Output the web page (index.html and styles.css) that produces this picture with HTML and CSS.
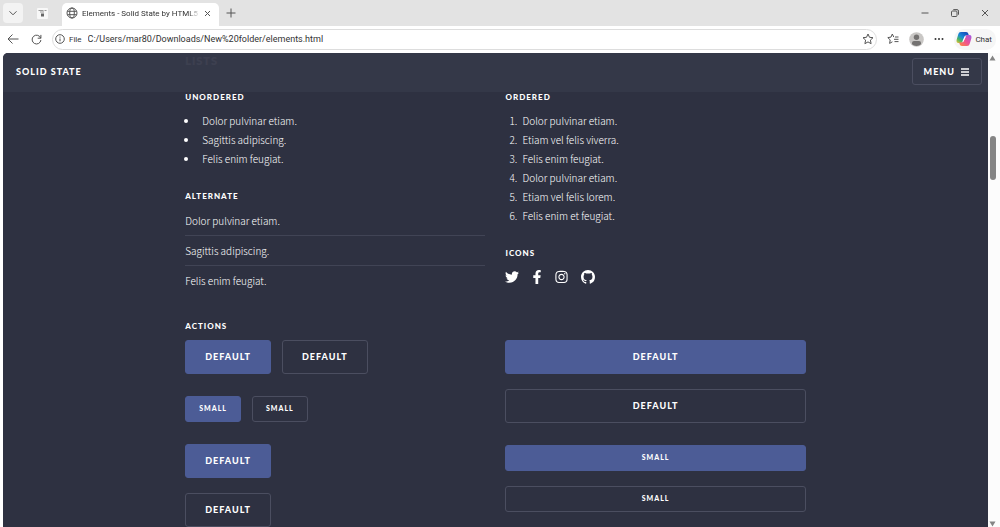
FILE: index.html
```html
<!DOCTYPE html>
<html lang="en">
<head>
    <meta charset="UTF-8">
    <meta name="viewport" content="width=device-width, initial-scale=1.0">
    <title>Elements - Solid State by HTML5 UP</title>
    <link rel="stylesheet" href="styles.css">
</head>
<body>
    <div class="tabbar">
        <button class="tab-search" aria-label="Search tabs">
            <svg width="10" height="10" viewBox="0 0 10 10"><path d="M1.500 3.300 5 6.800 8.500 3.300" class="line"/></svg>
        </button>
        <button class="pinned-tab" aria-label="Pinned tab">
            <svg width="11" height="11" viewBox="0 0 11 11"><rect width="11" height="11" rx="1" fill="#f8f8f8"/><path d="M1.500 2.500h5M7.500 2.500h2M3 4h4" stroke="#999" stroke-width="1"/><rect x="4" y="5.500" width="3" height="3" fill="#666"/></svg>
        </button>
        <div class="tab">
            <svg width="12" height="12" viewBox="0 0 12 12"><circle cx="6" cy="6" r="5" class="line"/><ellipse cx="6" cy="6" rx="2.300" ry="5" class="line"/><path d="M1.400 4.300h9.200M1.400 7.700h9.200" class="line"/></svg>
            <span class="tab-title">Elements - Solid State by HTML5 U</span>
            <button aria-label="Close tab">
                <svg width="7" height="7" viewBox="0 0 7 7"><path d="M1 1l5 5M6 1 1 6" class="line"/></svg>
            </button>
        </div>
        <button class="new-tab" aria-label="New tab">
            <svg width="10" height="10" viewBox="0 0 10 10"><path d="M5 .5v9M.5 5h9" class="line"/></svg>
        </button>
        <div class="window-buttons">
            <button aria-label="Minimize"><svg width="8" height="8" viewBox="0 0 8 8"><path d="M.5 4h7" class="line"/></svg></button>
            <button aria-label="Restore"><svg width="8" height="8" viewBox="0 0 8 8"><rect x=".5" y="2" width="5.500" height="5.500" rx="1" class="line"/><path d="M2.300.6h3.700a1.500 1.500 0 0 1 1.500 1.500v3.600" class="line"/></svg></button>
            <button aria-label="Close"><svg width="8" height="8" viewBox="0 0 8 8"><path d="M1 1l6 6M7 1 1 7" class="line"/></svg></button>
        </div>
    </div>

    <div class="toolbar">
        <button aria-label="Back"><svg width="12" height="12" viewBox="0 0 12 12"><path d="M11.500 6H1M5.500 1.500 1 6l4.500 4.500" class="line"/></svg></button>
        <button class="reload" aria-label="Reload"><svg width="11" height="11" viewBox="0 0 11 11"><path d="M9.700 4.200A4.400 4.400 0 1 0 9.900 6M9.900.9v3.300H6.700" class="line"/></svg></button>
        <div class="address">
            <svg width="10" height="10" viewBox="0 0 10 10"><circle cx="5" cy="5" r="4.300" class="line"/><path d="M5 4.500v2.800M5 2.600v1" class="line"/></svg>
            <label for="url">File</label>
            <input type="text" id="url" value="C:/Users/mar80/Downloads/New%20folder/elements.html">
            <button aria-label="Add to favorites"><svg width="12" height="12" viewBox="0 0 12 12"><path d="M6 1l1.500 3.300 3.500.4-2.600 2.400.7 3.600L6 8.900l-3.100 1.800.7-3.600L1 4.700l3.500-.4z" class="line"/></svg></button>
        </div>
        <button aria-label="Favorites"><svg width="12" height="12" viewBox="0 0 12 12"><path d="M6.800 4.100 5.300 1 4 4.100.8 4.600l2.400 2.300-.6 3.500L5.400 8.800M8 4h3.500M7 6.300h4.500M7.500 8.600h4" class="line"/></svg></button>
        <button aria-label="Profile"><svg width="15" height="15" viewBox="0 0 15 15"><circle cx="7.500" cy="7.500" r="7.300" fill="#c9c7c5"/><circle cx="7.500" cy="5.300" r="2.700" fill="#747271"/><path d="M3 12.300V11a2 2 0 0 1 2-2h5a2 2 0 0 1 2 2v1.300a6.500 6.500 0 0 1-9 0z" fill="#747271"/></svg></button>
        <button aria-label="Settings"><svg width="10" height="10" viewBox="0 0 10 10" fill="#333"><circle cx="1.500" cy="5" r="1"/><circle cx="5" cy="5" r="1"/><circle cx="8.500" cy="5" r="1"/></svg></button>
        <button class="chat">
            <svg width="16" height="16" viewBox="0 0 16 16">
                <defs>
                    <linearGradient id="cool" x1="0" y1="1" x2=".8" y2="0"><stop offset="0" stop-color="#f2c52c"/><stop offset=".3" stop-color="#45b36a"/><stop offset=".55" stop-color="#188ad8"/><stop offset="1" stop-color="#1747b8"/></linearGradient>
                    <linearGradient id="warm" x1="1" y1="0" x2="0" y2="1"><stop offset="0" stop-color="#a05be8"/><stop offset=".5" stop-color="#ed4f94"/><stop offset="1" stop-color="#ff8a3c"/></linearGradient>
                </defs>
                <path d="M5 1h5c1.500 0 2 .8 2.400 2l.5 1.500h-2.400c-1.300 0-2 .6-2.400 1.700l-1.300 3.800c-.4 1.300-1 2-2.200 2H2.500C.6 12 .2 10.300.7 8.500l1.500-5C2.700 1.800 3.500 1 5 1z" fill="url(#cool)"/>
                <path d="M11 15H6c-1.500 0-2-.8-2.400-2l-.5-1.500h2.400c1.300 0 2-.6 2.400-1.700L9.200 6c.4-1.300 1-2 2.200-2h2.100c1.900 0 2.300 1.700 1.800 3.500l-1.500 5c-.5 1.700-1.300 2.500-2.800 2.500z" fill="url(#warm)"/>
                <path d="M9 5.500h1L7.500 10.500H6.300z" fill="#fff"/>
            </svg>
            Chat
        </button>
    </div>

    <div class="viewport">
        <div class="page">
            <header class="header">
                <a href="#" class="logo">Solid State</a>
                <a href="#menu" class="menu">Menu
                    <svg width="8" height="8" viewBox="0 0 8 8"><path d="M0 1h8M0 4h8M0 7h8" stroke="#fff" stroke-width="1.600"/></svg>
                </a>
            </header>

            <main class="content">
                <h3>Lists</h3>
                <section class="columns">
                    <div>
                        <h4>Unordered</h4>
                        <ul>
                            <li>Dolor pulvinar etiam.</li>
                            <li>Sagittis adipiscing.</li>
                            <li>Felis enim feugiat.</li>
                        </ul>
                        <h4>Alternate</h4>
                        <ul class="alt">
                            <li>Dolor pulvinar etiam.</li>
                            <li>Sagittis adipiscing.</li>
                            <li>Felis enim feugiat.</li>
                        </ul>
                    </div>
                    <div>
                        <h4>Ordered</h4>
                        <ol>
                            <li>Dolor pulvinar etiam.</li>
                            <li>Etiam vel felis viverra.</li>
                            <li>Felis enim feugiat.</li>
                            <li>Dolor pulvinar etiam.</li>
                            <li>Etiam vel felis lorem.</li>
                            <li>Felis enim et feugiat.</li>
                        </ol>
                        <h4>Icons</h4>
                        <ul class="icons">
                            <li><a href="#" aria-label="Twitter"><svg width="14" height="14" viewBox="0 0 512 512"><path d="M459.370 151.716c.325 4.548.325 9.097.325 13.645 0 138.720-105.583 298.558-298.558 298.558-59.452 0-114.680-17.219-161.137-47.106 8.447.974 16.568 1.299 25.340 1.299 49.055 0 94.213-16.568 130.274-44.832-46.132-.975-84.792-31.188-98.112-72.772 6.498.974 12.995 1.624 19.818 1.624 9.421 0 18.843-1.300 27.614-3.573-48.081-9.747-84.143-51.980-84.143-102.985v-1.299c13.969 7.797 30.214 12.670 47.431 13.319-28.264-18.843-46.781-51.005-46.781-87.391 0-19.492 5.197-37.360 14.294-52.954 51.655 63.675 129.300 105.258 216.365 109.807-1.624-7.797-2.599-15.918-2.599-24.040 0-57.828 46.782-104.934 104.934-104.934 30.213 0 57.502 12.670 76.670 33.137 23.715-4.548 46.456-13.320 66.599-25.340-7.798 24.366-24.366 44.833-46.132 57.827 21.117-2.273 41.584-8.122 60.426-16.243-14.292 20.791-32.161 39.308-52.628 54.253z"/></svg></a></li>
                            <li><a href="#" aria-label="Facebook"><svg width="10" height="14" viewBox="0 0 320 512"><path d="M279.140 288l14.220-92.660h-88.910v-60.130c0-25.350 12.420-50.060 52.240-50.060h40.420V6.260S260.430 0 225.360 0c-73.220 0-121.080 44.380-121.080 124.720v70.620H22.890V288h81.390v224h100.170V288z"/></svg></a></li>
                            <li><a href="#" aria-label="Instagram"><svg width="13" height="14" viewBox="0 0 448 512"><path d="M224.100 141c-63.600 0-114.900 51.300-114.900 114.900s51.300 114.900 114.900 114.900S339 319.500 339 255.900 287.700 141 224.100 141zm0 189.600c-41.100 0-74.700-33.500-74.700-74.700s33.500-74.700 74.700-74.700 74.700 33.500 74.700 74.700-33.600 74.700-74.700 74.700zm146.400-194.300c0 14.900-12 26.800-26.800 26.800-14.900 0-26.800-12-26.800-26.800s12-26.800 26.800-26.800 26.800 12 26.800 26.800zm76.100 27.200c-1.700-35.900-9.900-67.700-36.200-93.900-26.200-26.200-58-34.400-93.900-36.200-37-2.100-147.900-2.100-184.900 0-35.800 1.700-67.600 9.900-93.900 36.100s-34.400 58-36.200 93.900c-2.100 37-2.100 147.900 0 184.900 1.700 35.900 9.900 67.700 36.200 93.900s58 34.400 93.900 36.200c37 2.100 147.900 2.100 184.900 0 35.900-1.700 67.700-9.900 93.900-36.200 26.200-26.200 34.400-58 36.200-93.900 2.100-37 2.100-147.800 0-184.800zM398.800 388c-7.800 19.600-22.900 34.700-42.600 42.600-29.500 11.700-99.500 9-132.100 9s-102.700 2.600-132.100-9c-19.600-7.800-34.700-22.900-42.600-42.600-11.700-29.500-9-99.500-9-132.100s-2.600-102.700 9-132.100c7.800-19.600 22.900-34.700 42.600-42.600 29.500-11.700 99.500-9 132.100-9s102.700-2.600 132.100 9c19.600 7.800 34.700 22.900 42.600 42.600 11.700 29.500 9 99.500 9 132.100s2.700 102.700-9 132.100z"/></svg></a></li>
                            <li><a href="#" aria-label="GitHub"><svg width="14" height="14" viewBox="0 0 16 16"><path d="M8 0C3.580 0 0 3.580 0 8c0 3.540 2.290 6.530 5.470 7.590.4.070.55-.17.55-.38 0-.19-.01-.82-.01-1.490-2.010.37-2.530-.49-2.690-.94-.09-.23-.48-.94-.82-1.130-.28-.15-.68-.52-.01-.53.63-.01 1.080.58 1.230.82.72 1.210 1.870.87 2.330.66.07-.52.28-.87.51-1.070-1.780-.2-3.640-.89-3.640-3.950 0-.87.31-1.590.82-2.150-.08-.2-.36-1.020.08-2.120 0 0 .67-.21 2.200.82.64-.18 1.320-.27 2-.27s1.360.09 2 .27c1.530-1.040 2.200-.82 2.200-.82.44 1.100.16 1.920.08 2.120.51.56.82 1.270.82 2.150 0 3.070-1.870 3.750-3.650 3.950.29.25.54.73.54 1.480 0 1.070-.01 1.930-.01 2.200 0 .21.15.46.55.38A8.010 8.010 0 0 0 16 8c0-4.420-3.580-8-8-8z"/></svg></a></li>
                        </ul>
                    </div>
                </section>

                <section>
                    <h4>Actions</h4>
                    <div class="columns">
                        <div class="stack">
                            <div class="actions">
                                <button class="button primary">Default</button>
                                <button class="button">Default</button>
                            </div>
                            <div class="actions">
                                <button class="button primary small">Small</button>
                                <button class="button small">Small</button>
                            </div>
                            <div class="actions stacked">
                                <button class="button primary">Default</button>
                                <button class="button">Default</button>
                            </div>
                        </div>
                        <div class="stack">
                            <div class="actions stacked fit">
                                <button class="button primary">Default</button>
                                <button class="button">Default</button>
                            </div>
                            <div class="actions stacked fit">
                                <button class="button primary small">Small</button>
                                <button class="button small">Small</button>
                            </div>
                        </div>
                    </div>
                </section>
            </main>
        </div>
        <div class="scrollbar">
            <svg width="7" height="6" viewBox="0 0 7 6"><path d="M3.500.5 6.500 5.500h-6z" fill="#858585"/></svg>
            <div class="thumb"></div>
            <svg width="7" height="6" viewBox="0 0 7 6"><path d="M3.500 5.500.5.500h6z" fill="#858585"/></svg>
        </div>
    </div>
</body>
</html>
```
FILE: styles.css
```css
* {
    box-sizing: border-box;
}
body {
    margin: 0;
    height: 100vh;
    display: flex;
    flex-direction: column;
    overflow: hidden;
    background: #fff;
    color: #333;
    font-family: Roboto, "Noto Sans", sans-serif;
    font-size: 9px;
}
button {
    display: flex;
    align-items: center;
    justify-content: center;
    padding: 0;
    border: 0;
    background: none;
    color: inherit;
    font: inherit;
}
svg {
    flex: none;
    display: block;
}
.line {
    fill: none;
    stroke: #555;
    stroke-width: 1;
}

/* browser tabs */
.tabbar {
    flex: none;
    display: flex;
    align-items: center;
    height: 26px;
    padding-left: 3px;
    background: #e3e3e3;
}
.tab-search {
    width: 20px;
    height: 20px;
    border-radius: 4px;
    background: #f3f3f3;
}
.pinned-tab {
    width: 39px;
}
.tab {
    display: flex;
    align-items: center;
    align-self: flex-end;
    gap: 4px;
    width: 157px;
    height: 23px;
    padding: 0 8px 3px 4px;
    border-radius: 5px 5px 0 0;
    background: #fff;
}
.tab-title {
    flex: 1;
    overflow: hidden;
    white-space: nowrap;
    font-size: 8px;
    -webkit-mask-image: linear-gradient(to right, #000 90%, transparent);
    mask-image: linear-gradient(to right, #000 90%, transparent);
}
.new-tab {
    width: 24px;
}
.window-buttons {
    display: flex;
    margin-left: auto;
}
.window-buttons button {
    width: 30px;
    height: 26px;
}

/* address bar */
.toolbar {
    flex: none;
    display: flex;
    align-items: center;
    gap: 10px;
    height: 27px;
    padding: 0 4px 1px 7px;
}
.reload {
    margin-left: 2px;
}
.address {
    flex: 1;
    display: flex;
    align-items: center;
    height: 21px;
    padding: 0 2px;
    border: 1px solid #ddd;
    border-radius: 11px;
}
.address label {
    margin: 0 6px 0 4px;
    font-size: 8px;
}
.address input {
    flex: 1;
    padding: 0;
    border: 0;
    outline: 0;
    color: #333;
    font: inherit;
}
.chat {
    gap: 3px;
    height: 21px;
    padding: 0 4px 0 2px;
    border-radius: 10px;
    background: #f6f6f6;
    font-size: 8px;
}

/* page area */
.viewport {
    flex: 1;
    min-height: 0;
    display: flex;
    padding-left: 3px;
}
.page {
    flex: 1;
    position: relative;
    overflow: hidden;
    border-radius: 5px 0 0 0;
    background: #2e3141;
    color: #fff;
    font-family: "Noto Sans CJK SC", sans-serif;
    font-size: 10px;
    font-weight: 300;
    line-height: 19px;
}
.header {
    position: absolute;
    top: 0;
    left: 0;
    right: 0;
    display: flex;
    align-items: center;
    justify-content: space-between;
    height: 39px;
    padding: 0 6px 2px 13px;
    background: rgba(53, 56, 73, 0.96);
}
.logo, .menu, h3, h4, .button {
    font-family: Lato, sans-serif;
    font-weight: 900;
    letter-spacing: 1px;
    text-transform: uppercase;
}
.logo, .menu {
    color: #fff;
    font-size: 9px;
    text-decoration: none;
}
.menu {
    display: flex;
    align-items: center;
    gap: 6px;
    height: 27px;
    padding: 0 12px 0 11px;
    border: 1px solid #4b4e60;
    border-radius: 3px;
}
.content {
    width: 63%;
    margin: 0 auto;
}
h3 {
    margin: 0;
    padding-bottom: 20px;
    font-size: 11px;
    line-height: 16px;
}
h4 {
    margin: 0 0 6px;
    font-size: 8px;
    line-height: 16px;
}
.columns {
    display: grid;
    grid-template-columns: 1fr 1fr;
    gap: 20px;
}
ul, ol {
    margin: 0 0 20px;
    padding-left: 14px;
}
li {
    padding-left: 3px;
}
.content .alt {
    padding: 0;
    margin-bottom: 23px;
    list-style: none;
}
.alt li {
    padding: 5px 0;
    border-top: 1px solid #414455;
}
.alt li:first-child {
    padding-top: 1px;
    border-top: 0;
}
.icons {
    display: flex;
    gap: 13px;
    margin: 0;
    padding: 3px 0 0;
    list-style: none;
}
.icons li {
    padding: 0;
}
.icons svg {
    fill: #fff;
}
.stack {
    display: flex;
    flex-direction: column;
    gap: 22px;
}
.actions {
    display: flex;
    gap: 11px;
}
.stacked {
    flex-direction: column;
    align-items: flex-start;
    gap: 15px;
}
.fit {
    align-items: stretch;
}
.button {
    height: 34px;
    padding: 0 19px 1px;
    border: 1px solid #4b4e60;
    border-radius: 3px;
    font-size: 9px;
}
.primary {
    border-color: #4c5c96;
    background: #4c5c96;
}
.small {
    height: 26px;
    padding: 0 13px 1px;
    font-size: 7px;
}

/* scrollbar */
.scrollbar {
    flex: none;
    display: flex;
    flex-direction: column;
    align-items: center;
    width: 12px;
    padding: 2px 3px 0 0;
    background: #fcfcfc;
}
.thumb {
    width: 6px;
    height: 44px;
    margin: 75px 0 auto;
    border-radius: 3px;
    background: #858585;
}
```
